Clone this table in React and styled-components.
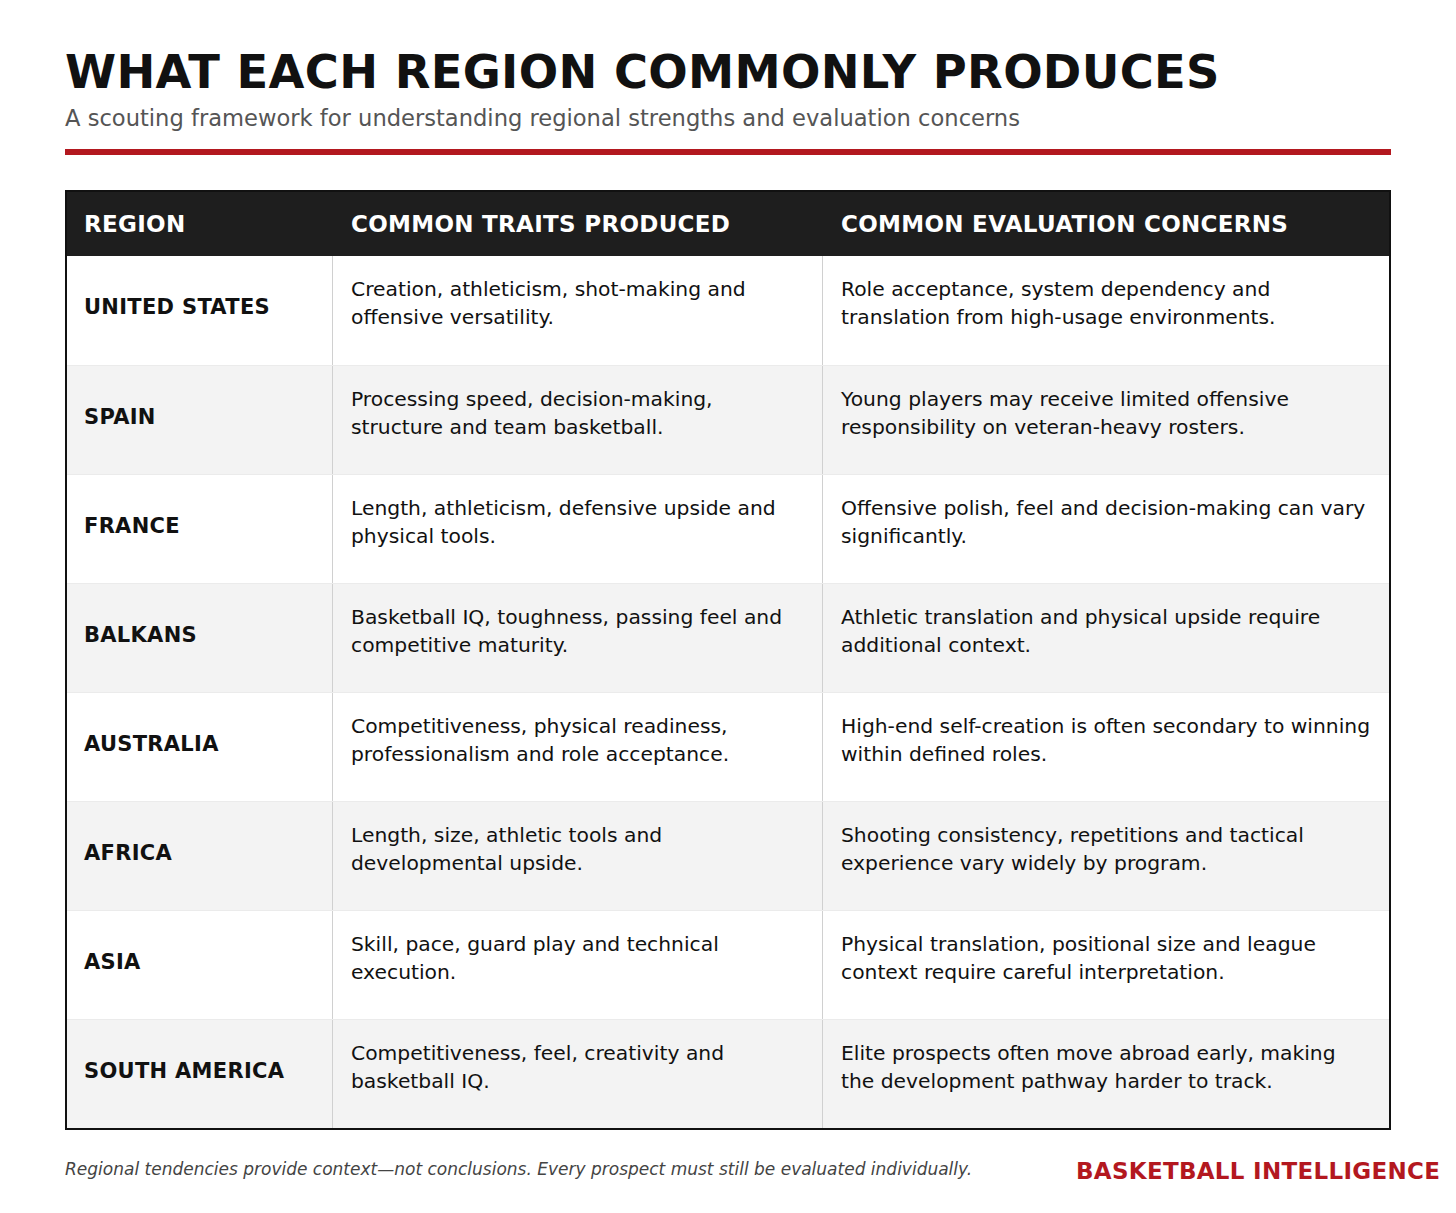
import React from "react";
import styled, { createGlobalStyle } from "styled-components";

const GlobalStyle = createGlobalStyle`
  * { box-sizing: border-box; }
  body {
    margin: 0;
    background: #fff;
    font-family: "DejaVu Sans", "Noto Sans", sans-serif;
    color: #111;
  }
`;

const Page = styled.div`
  width: 1456px;
  padding: 45px 65px 30px 65px;
`;

const Header = styled.header`
  padding-bottom: 18px;
  border-bottom: 6px solid #b3181f;
`;

const Title = styled.h1`
  margin: 0;
  font-size: 46.4px;
  line-height: 54px;
  font-weight: 700;
  letter-spacing: 0.3px;
  color: #111;
`;

const Subtitle = styled.p`
  margin: 6px 0 0 0;
  font-size: 22.6px;
  line-height: 26px;
  color: #555;
`;

const Table = styled.div`
  margin-top: 35px;
  border: 2px solid #111;
`;

const Row = styled.div`
  display: grid;
  grid-template-columns: 265px 490px 1fr;
  align-items: ${(p) => (p.$head ? "center" : "start")};
  min-height: ${(p) => (p.$head ? "64px" : "109px")};
  background: ${(p) => (p.$head ? "#1e1e1e" : p.$shade ? "#f3f3f3" : "#fff")};
  border-top: ${(p) => (p.$head || p.$first ? "none" : "1px solid #ebebeb")};
`;

const HeadCell = styled.div`
  padding: 0 18px 0 ${(p) => (p.$first ? "17px" : "19px")};
  font-size: 23px;
  line-height: 26px;
  font-weight: 700;
  letter-spacing: 0.3px;
  color: #fff;
`;

const Cell = styled.div`
  align-self: stretch;
  padding: 19px 18px 19px 18px;
  font-size: 20.3px;
  line-height: 28px;
  color: #111;
  border-left: 1px solid #d0d0d0;
`;

const RegionCell = styled.div`
  padding: 37px 18px 18px 17px;
  font-size: 21px;
  line-height: 28px;
  font-weight: 700;
  letter-spacing: 0.3px;
  color: #111;
`;

const Footer = styled.footer`
  display: flex;
  align-items: center;
  margin-top: 28px;
`;

const FootNote = styled.p`
  flex: 0 0 1011px;
  margin: 0;
  padding-bottom: 6px;
  font-size: 17px;
  line-height: 20px;
  font-style: italic;
  color: #444;
`;

const Brand = styled.div`
  white-space: nowrap;
  font-size: 23px;
  line-height: 27px;
  font-weight: 700;
  letter-spacing: 0.3px;
  color: #b3181f;
`;

const rows = [
  {
    region: "UNITED STATES",
    traits: "Creation, athleticism, shot-making and offensive versatility.",
    concerns:
      "Role acceptance, system dependency and translation from high-usage environments.",
  },
  {
    region: "SPAIN",
    traits: "Processing speed, decision-making, structure and team basketball.",
    concerns:
      "Young players may receive limited offensive responsibility on veteran-heavy rosters.",
  },
  {
    region: "FRANCE",
    traits: "Length, athleticism, defensive upside and physical tools.",
    concerns:
      "Offensive polish, feel and decision-making can vary significantly.",
  },
  {
    region: "BALKANS",
    traits:
      "Basketball IQ, toughness, passing feel and competitive maturity.",
    concerns:
      "Athletic translation and physical upside require additional context.",
  },
  {
    region: "AUSTRALIA",
    traits:
      "Competitiveness, physical readiness, professionalism and role acceptance.",
    concerns:
      "High-end self-creation is often secondary to winning within defined roles.",
  },
  {
    region: "AFRICA",
    traits: "Length, size, athletic tools and developmental upside.",
    concerns:
      "Shooting consistency, repetitions and tactical experience vary widely by program.",
  },
  {
    region: "ASIA",
    traits: "Skill, pace, guard play and technical execution.",
    concerns:
      "Physical translation, positional size and league context require careful interpretation.",
  },
  {
    region: "SOUTH AMERICA",
    traits: "Competitiveness, feel, creativity and basketball IQ.",
    concerns:
      "Elite prospects often move abroad early, making the development pathway harder to track.",
  },
];

export default function App() {
  return (
    <Page>
      <GlobalStyle />
      <Header>
        <Title>WHAT EACH REGION COMMONLY PRODUCES</Title>
        <Subtitle>
          A scouting framework for understanding regional strengths and
          evaluation concerns
        </Subtitle>
      </Header>

      <Table>
        <Row $head>
          <HeadCell $first>REGION</HeadCell>
          <HeadCell>COMMON TRAITS PRODUCED</HeadCell>
          <HeadCell>COMMON EVALUATION CONCERNS</HeadCell>
        </Row>
        {rows.map((r, i) => (
          <Row key={r.region} $shade={i % 2 === 1} $first={i === 0}>
            <RegionCell>{r.region}</RegionCell>
            <Cell>{r.traits}</Cell>
            <Cell>{r.concerns}</Cell>
          </Row>
        ))}
      </Table>

      <Footer>
        <FootNote>
          Regional tendencies provide context—not conclusions. Every prospect
          must still be evaluated individually.
        </FootNote>
        <Brand>BASKETBALL INTELLIGENCE</Brand>
      </Footer>
    </Page>
  );
}
